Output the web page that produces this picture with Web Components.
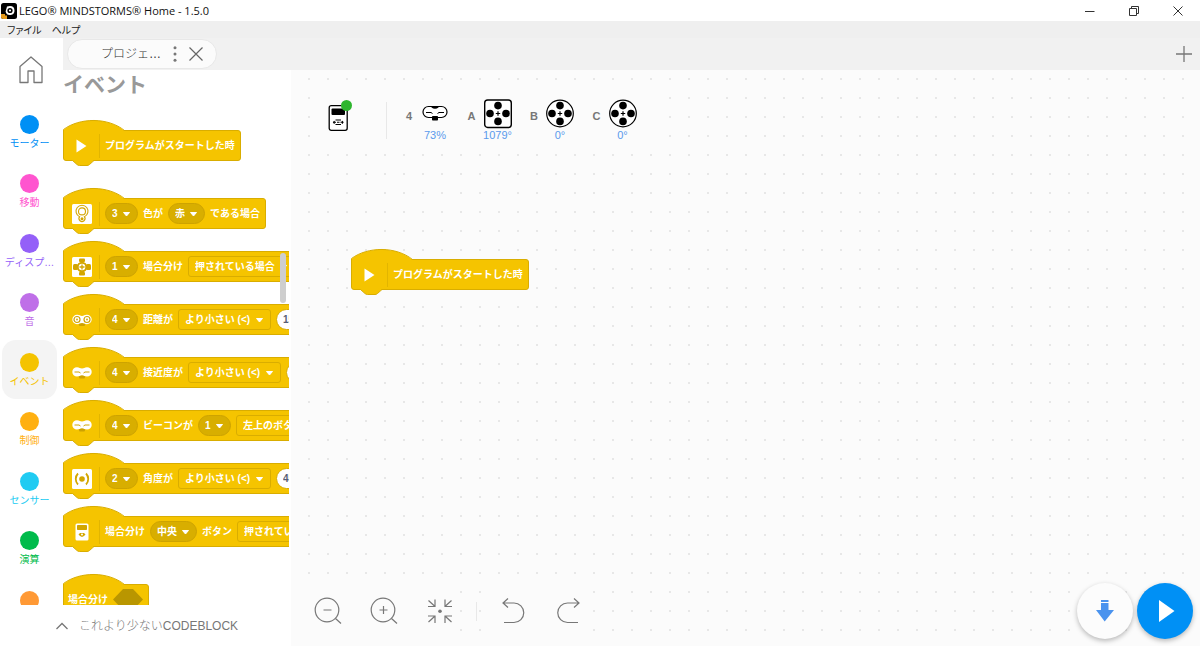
<!DOCTYPE html>
<html lang="ja">
<head>
<meta charset="utf-8">
<title>LEGO® MINDSTORMS® Home - 1.5.0</title>
<style>
html, body { margin: 0; height: 100%; }
body { font-family: "Liberation Sans", "Noto Sans CJK JP", sans-serif; background: #fff; overflow: hidden; }
</style>
</head>
<body>
<mindstorms-app></mindstorms-app>
<script>
const BASE = `<style>
*, *::before, *::after { box-sizing: border-box; }
button, select, input { font: inherit; color: inherit; margin: 0; padding: 0; border: 0; background: none; outline: 0; }
svg { display: block; overflow: visible; }
</style>`;

function define(name, markup, setup) {
  const template = document.createElement('template');
  template.innerHTML = BASE + markup;
  customElements.define(name, class extends HTMLElement {
    connectedCallback() {
      if (this.shadowRoot) return;
      this.attachShadow({ mode: 'open' }).append(template.content.cloneNode(true));
      if (setup) setup(this, this.shadowRoot);
    }
  });
}

const MOTOR = `<circle cx="14" cy="6.6" r="3.800"/><circle cx="6" cy="14.5" r="3.800"/><circle cx="22" cy="14.5" r="3.800"/><circle cx="14" cy="22.4" r="3.800"/><path d="M14 12.300v4.400M11.800 14.500h4.400" stroke="#000" stroke-width="1.2"/>`;
const ICONS = {
  play: [20, 20, `<path d="M4.500 3.500v13l10-6.500z" fill="#fff"/>`],
  color: [20, 20, `<rect width="20" height="20" rx="1.500" fill="#fff"/><g fill="none" stroke="#d3a600" stroke-width="1.100"><path d="M7.600 12.700A6 6 0 1 1 12.400 12.700A3 3 0 1 1 7.600 12.700Z"/><circle cx="10" cy="7.400" r="3.500"/></g><circle cx="10" cy="14.700" r="1.500" fill="#d3a600"/>`],
  force: [20, 20, `<rect width="20" height="20" rx="1.500" fill="#fff"/><g fill="#d3a600"><rect x="7" y="1.500" width="6" height="3.500" rx="1"/><rect x="7" y="15" width="6" height="3.500" rx="1"/><rect x="1" y="7" width="5" height="6" rx="1.500"/><rect x="14" y="7" width="5" height="6" rx="1.500"/></g><circle cx="10" cy="10" r="4.300" fill="#fff" stroke="#d3a600" stroke-width="2"/><path d="M10 7.500v5M7.500 10h5" stroke="#d3a600" stroke-width="1.300"/>`],
  distance: [20, 20, `<rect x="7" y="10" width="6" height="6" rx="1" fill="#cda200"/><path d="M5 4.800h.500c2 0 2.500 1.200 4.500 1.200s2.500-1.200 4.500-1.200h.500a4.700 4.700 0 0 1 0 9.400c-2.500 0-3-1.200-5-1.200s-2.500 1.200-5 1.200a4.700 4.700 0 0 1 0-9.400z" fill="#fff"/><g fill="#fff" stroke="#d3a600" stroke-width="1.200"><circle cx="5" cy="9.500" r="3"/><circle cx="15" cy="9.500" r="3"/></g><g fill="#d3a600"><circle cx="5" cy="9.500" r=".9"/><circle cx="15" cy="9.500" r=".9"/></g>`],
  near: [20, 20, `<rect x="7" y="10" width="6" height="5.500" rx="1" fill="#cda200"/><path d="M5 4.200c2.500 0 3 1.300 5 1.300s2.500-1.300 5-1.300a4.700 4.700 0 0 1 0 9.400c-2.500 0-3-1.300-5-1.300s-2.500 1.300-5 1.300a4.700 4.700 0 0 1 0-9.400z" fill="#fff"/><path d="M2.500 9h4.500l1.500 1M17.500 9h-4.500l-1.500 1" fill="none" stroke="#d3a600"/>`],
  angle: [20, 20, `<rect width="20" height="20" rx="1.500" fill="#fff"/><circle cx="10" cy="10" r="2.800" fill="#d3a600"/><path d="M6 4.500c-3 3-3 8 0 11M14 4.500c3 3 3 8 0 11" fill="none" stroke="#d3a600" stroke-width="1.800"/>`],
  brick: [20, 20, `<rect x="3.500" y="1.500" width="13" height="17" rx="1.500" fill="#fff"/><rect x="5" y="3" width="10" height="5" rx=".8" fill="#d3a600"/><path d="M6.500 12.500l1.500-1.500h4l1.500 1.500-1.500 1.500-2 1-2-1z" fill="#d3a600"/><circle cx="10" cy="12.500" r="1" fill="#fff"/>`],
  eyes: [28, 30, `<rect x="2" y="7.500" width="24" height="11" rx="5.500" fill="#fff" stroke="#000" stroke-width="1.200"/><path d="M10.500 7h7v1.500q-3.500 2.500-7 0z"/><path d="M5 13.500h5l1.500 1M23 13.500h-5l-1.500 1" fill="none" stroke="#000"/><rect x="11" y="17" width="6" height="4.500" rx=".8"/>`],
  motorSquare: [28, 30, `<rect x=".7" y="1" width="26.600" height="27.500" rx="3" fill="#fff" stroke="#000" stroke-width="1.400"/>${MOTOR}`],
  motorRound: [28, 30, `<circle cx="14" cy="14.500" r="13.300" fill="#fff" stroke="#000" stroke-width="1.200"/>${MOTOR}`],
  hub: [20, 26, `<rect x="1.200" y=".7" width="18" height="24.600" rx="2" fill="#fff" stroke="#000" stroke-width="1.300"/><rect x="3.500" y="3.500" width="13.500" height="6.500" rx="1"/><path d="M7.500 15h5.500M7.500 19.500h5.500M5.500 17.300h2.500M12.500 17.300h2.500M9 17.300h2.500M6.500 16l-1 1.300 1 1.300M14 16l1 1.300-1 1.300" fill="none" stroke="#000" stroke-width="1.100"/>`],
  app: [16, 16, `<rect width="16" height="16" rx="2.500" fill="#000"/><path d="M9 3a4.500 4.500 0 1 1-4.400 5.500L6 3.500z" fill="#fff"/><circle cx="9" cy="7.500" r="2.600" fill="#000"/><circle cx="9" cy="7.500" r="1.100" fill="#fff"/><path d="M0 11h4v1.500h2V16H2.500A2.500 2.500 0 0 1 0 13.500z" fill="#e59b1c"/>`],
  minimize: [10, 10, `<path d="M0 5.500h9.500" stroke="#333"/>`],
  restore: [10, 10, `<path d="M.500 2.500h7v7h-7zM2.500 2.500v-2h7v7h-2" fill="none" stroke="#333"/>`],
  closeWindow: [10, 10, `<path d="M.500.500l9 9M9.500.500l-9 9" stroke="#333"/>`],
  home: [24, 28, `<path d="M1 10.500L12 1l11 9.500V26.500H15V15H9v11.500H1z" fill="none" stroke="#777" stroke-width="1.300" stroke-linejoin="round"/>`],
  kebab: [4, 16, `<g fill="#777"><circle cx="2" cy="1.800" r="1.500"/><circle cx="2" cy="8" r="1.500"/><circle cx="2" cy="14.200" r="1.500"/></g>`],
  close: [14, 14, `<path d="M.500.500l13 13M13.500.500l-13 13" stroke="#666" stroke-width="1.200"/>`],
  plus: [16, 16, `<path d="M8 0v16M0 8h16" stroke="#777" stroke-width="1.300"/>`],
  chevron: [12, 8, `<path d="M.500 7L6 1.500 11.500 7" fill="none" stroke="#777" stroke-width="1.300"/>`],
  zoomOut: [28, 28, `<g fill="none" stroke="#777" stroke-width="1.200"><circle cx="13" cy="13" r="11.800"/><path d="M9.500 13h8M21.500 21.500l5.500 5"/></g>`],
  zoomIn: [28, 28, `<g fill="none" stroke="#777" stroke-width="1.200"><circle cx="13" cy="13" r="11.800"/><path d="M9.500 13h8M13.500 9v8M21.500 21.500l5.500 5"/></g>`],
  fit: [28, 28, `<g fill="none" stroke="#777" stroke-width="1.200"><path d="M2 9.500h7V2.500M2.500 3.500l6 5.500M26 9.500h-7V2.500M25.500 3.500l-6 5.500M2 19h7v7M2.500 25l6-5.500M26 19h-7v7M25.500 25l-6-5.500"/></g><circle cx="14" cy="14.300" r="1.800" fill="#777"/>`],
  undo: [28, 28, `<path d="M9 1.500L4 6l5 4.500M4 6h11a9.600 9.600 0 0 1 0 19.500H5" fill="none" stroke="#777" stroke-width="1.200"/>`],
  redo: [28, 28, `<path d="M19 1.500L24 6l-5 4.500M24 6H12.500a9.600 9.600 0 0 0 0 19.500H23" fill="none" stroke="#777" stroke-width="1.200"/>`],
  download: [20, 24, `<path d="M6 1h7.500v2H6zM6 4h7.500v7H19L9.700 22.500 1 11h5z" fill="#4a93ee"/>`],
  run: [18, 22, `<path d="M1 0v22l15.500-11z" fill="#fff"/>`]
};

define('ui-icon', `<style>:host{display:block;flex:none}</style><svg aria-hidden="true"></svg>`, (host, root) => {
  const [w, h, body] = ICONS[host.getAttribute('name')];
  const svg = root.querySelector('svg');
  svg.setAttribute('viewBox', `0 0 ${w} ${h}`);
  svg.setAttribute('width', w);
  svg.setAttribute('height', h);
  svg.innerHTML = body;
});

define('window-title', `<style>
:host { display: flex; align-items: center; height: 21px; background: #fff; padding-left: 1px; color: #111; font: 11px/20px "Open Sans", "Noto Sans CJK JP", sans-serif; }
span { flex: 1; padding-left: 2px; }
button { width: 44px; height: 21px; display: grid; place-items: center; }
</style>
<ui-icon name="app"></ui-icon><span><slot></slot></span>
<button aria-label="最小化"><ui-icon name="minimize"></ui-icon></button>
<button aria-label="元に戻す"><ui-icon name="restore"></ui-icon></button>
<button aria-label="閉じる"><ui-icon name="closeWindow"></ui-icon></button>`);

define('menu-bar', `<style>
:host { display: flex; align-items: center; gap: 10px; height: 17px; padding-left: 7px; background: #efefef; color: #222; font: 10px/16px "Noto Sans CJK JP", sans-serif; }
button { font-feature-settings: "palt"; }
</style><button>ファイル</button><button>ヘルプ</button>`);

define('tab-bar', `<style>
:host { display: flex; align-items: center; justify-content: space-between; background: #f1f1f1; padding: 0 8px 0 4px; }
.tab { display: flex; align-items: center; height: 30px; width: 150px; border: 1px solid #e8e8e8; border-radius: 15px; background: #fbfbfb; padding: 0 13px 0 33px; color: #333; font-size: 12px; }
.name { flex: 1; line-height: 20px; white-space: nowrap; font-family: "Liberation Sans", "Noto Sans CJK JP", sans-serif; font-weight: 300; }
.more { margin: 0 12px; }
</style>
<div class="tab"><span class="name"><slot></slot></span><button class="more" aria-label="メニュー"><ui-icon name="kebab"></ui-icon></button><button aria-label="閉じる"><ui-icon name="close"></ui-icon></button></div>
<button aria-label="追加"><ui-icon name="plus"></ui-icon></button>`);

define('category-item', `<style>
:host { display: block; padding-left: 2px; min-height: 0; }
button { width: 55px; height: 59px; border-radius: 14px; display: flex; flex-direction: column; align-items: center; padding-top: 13px; gap: 3px; color: var(--tone); }
:host([active]) button { background: #f4f4f4; }
i { width: 19px; height: 19px; border-radius: 50%; background: var(--tone); flex: none; }
span { font: 10px/14px "Liberation Sans", "Noto Sans CJK JP", sans-serif; white-space: nowrap; }
</style><button><i></i><span><slot></slot></span></button>`);

define('side-rail', `<style>
:host { display: flex; flex-direction: column; background: #fff; overflow: hidden; min-height: 0; }
.home { align-self: flex-start; margin: 18px 0 18px 19px; }
nav { display: grid; grid-template-rows: repeat(9, 1fr); height: 535px; flex: none; }
</style>
<button class="home" aria-label="ホーム"><ui-icon name="home"></ui-icon></button>
<nav>
<category-item style="--tone:#0090f5">モーター</category-item>
<category-item style="--tone:#ff55cf">移動</category-item>
<category-item style="--tone:#9460f8">ディスプ…</category-item>
<category-item style="--tone:#bf6fe8">音</category-item>
<category-item active style="--tone:#f4c300">イベント</category-item>
<category-item style="--tone:#ffb011">制御</category-item>
<category-item style="--tone:#20cbf2">センサー</category-item>
<category-item style="--tone:#00bb4b">演算</category-item>
<category-item style="--tone:#ff9935"></category-item>
</nav>`);

/* Drop-down inside a block; kind="round" gives the dark pill. */
define('block-menu', `<style>
:host { display: block; flex: none; position: relative; height: 21px; }
select { appearance: none; display: block; height: 21px; padding: 0 19px 0 6px; border: 1px solid #d9ad00; border-radius: 3px; font-weight: 700; }
:host([kind="round"]) select { background: #d8ae00; border-color: #cda300; border-radius: 11px; }
svg { position: absolute; right: 8px; top: 9px; pointer-events: none; }
option { color: #333; }
</style><select></select><svg width="7" height="5" viewBox="0 0 7 5"><path d="M.500.500h6L3.500 4z" fill="#fff" stroke="#fff" stroke-linejoin="round"/></svg>`, (host, root) => {
  const select = root.querySelector('select');
  select.setAttribute('aria-label', host.getAttribute('label') || '選択');
  select.add(new Option(host.getAttribute('value')));
});

define('block-number', `<style>
:host { display: block; flex: none; }
input { display: block; width: 32px; height: 21px; border: 1px solid #d9ad00; border-radius: 11px; background: #fff; color: #575e75; font-weight: 700; padding-left: 6px; }
</style><input aria-label="数値">`, (host, root) => { root.querySelector('input').value = host.getAttribute('value'); });

/* Event block: a hat on top, a row of fields, and a connector below. */
define('hat-block', `<style>
:host { display: block; position: relative; width: max-content; padding: 10px 0 5px; color: #fff; font: bold 10px/15px "Liberation Sans", "Noto Sans CJK JP", sans-serif; }
.row { display: flex; align-items: center; gap: 5px; height: 31px; padding: 0 5px 0 4px; background: #f5c400; border: 1px solid #d9ad00; border-radius: 0 3px 3px 3px; white-space: nowrap; }
.hat, .foot { position: absolute; left: 0; }
.hat { top: 0; } .foot { bottom: 0; }
.lead { display: flex; align-items: center; gap: 7px; padding-left: 4px; }
.lead::after { content: ""; width: 1px; height: 24px; background: #e2b500; }
:host(:not([icon])) .lead { display: none; }
</style>
<div class="row"><span class="lead"></span><slot></slot></div>
<svg class="hat" width="62" height="12"><path d="M1 12V9.500C17-2.700 45-2.700 61 10.500V12z" fill="#f5c400"/><path d="M.500 12V9.500C17-2.700 45-2.700 61.500 10.500" fill="none" stroke="#d9ad00"/></svg>
<svg class="foot" width="34" height="6"><path d="M9 0L14 4.500Q15 5.500 16.500 5.500H24Q25.500 5.500 26.500 4.500L31 0z" fill="#f5c400"/><path d="M9.500.500L14 4.500Q15 5.500 16.500 5.500H24Q25.500 5.500 26.500 4.500L31 .500" fill="none" stroke="#d9ad00"/></svg>`, (host, root) => {
  if (!host.hasAttribute('icon')) return;
  const icon = document.createElement('ui-icon');
  icon.setAttribute('name', host.getAttribute('icon'));
  root.querySelector('.lead').append(icon);
});

define('condition-slot', `<style>:host{display:block;flex:none}</style><svg width="30" height="21"><path d="M0 10.500L10 0h10l10 10.500L20 21H10z" fill="#b99600"/></svg>`);

define('block-palette', `<style>
:host { display: block; position: relative; background: #fff; min-height: 0; }
.view { height: 100%; margin-right: 2px; overflow-x: clip; }
h2 { margin: 0 0 23px; color: #999; font: bold 21px/27px "Noto Sans CJK JP", sans-serif; }
.list, .group { display: flex; flex-direction: column; }
.list { gap: 22px; } .group { gap: 7px; }
.thumb { position: absolute; right: 5px; top: 183px; width: 6px; height: 50px; border-radius: 3px; background: #cecece; }
</style>
<div class="view"><h2>イベント</h2>
<div class="list">
<hat-block icon="play"><span>プログラムがスタートした時</span></hat-block>
<div class="group">
<hat-block icon="color"><block-menu kind="round" value="3"></block-menu><span>色が</span><block-menu kind="round" value="赤"></block-menu><span>である場合</span></hat-block>
<hat-block icon="force"><block-menu kind="round" value="1"></block-menu><span>場合分け</span><block-menu value="押されている場合"></block-menu></hat-block>
<hat-block icon="distance"><block-menu kind="round" value="4"></block-menu><span>距離が</span><block-menu value="より小さい (&lt;)"></block-menu><block-number value="15"></block-number></hat-block>
<hat-block icon="near"><block-menu kind="round" value="4"></block-menu><span>接近度が</span><block-menu value="より小さい (&lt;)"></block-menu><block-number value=""></block-number></hat-block>
<hat-block icon="near"><block-menu kind="round" value="4"></block-menu><span>ビーコンが</span><block-menu kind="round" value="1"></block-menu><block-menu value="左上のボタン"></block-menu></hat-block>
<hat-block icon="angle"><block-menu kind="round" value="2"></block-menu><span>角度が</span><block-menu value="より小さい (&lt;)"></block-menu><block-number value="45"></block-number></hat-block>
<hat-block icon="brick"><span>場合分け</span><block-menu kind="round" value="中央"></block-menu><span>ボタン</span><block-menu value="押されている"></block-menu></hat-block>
</div>
<hat-block><span>場合分け</span><condition-slot></condition-slot></hat-block>
</div></div>
<div class="thumb"></div>`);

define('palette-footer', `<style>
:host { display: block; position: relative; z-index: 1; background: #fff; }
button { display: flex; align-items: center; gap: 11px; height: 41px; padding-left: 56px; color: #777; font: 12px/18px "Liberation Sans", "Noto Sans CJK JP", sans-serif; font-weight: 300; white-space: nowrap; }
</style><button><ui-icon name="chevron"></ui-icon><span>これより少ないCODEBLOCK</span></button>`);

define('port-status', `<style>
:host { display: grid; grid-template-columns: 10px 42px; justify-items: center; align-items: center; }
b { font-size: 11px; line-height: 14px; color: #777; padding-top: 4px; }
span { grid-column: 2; font-size: 11px; line-height: 12px; color: #5a9aec; }
</style><b></b><div class="pic"></div><span><slot></slot></span>`, (host, root) => {
  root.querySelector('b').textContent = host.getAttribute('port');
  const icon = document.createElement('ui-icon');
  icon.setAttribute('name', host.getAttribute('device'));
  root.querySelector('.pic').append(icon);
});

define('hub-bar', `<style>
:host { display: flex; align-items: center; background: #fbfbfb; }
.hub { position: relative; margin: 0 38px 4px 0; }
.hub i { position: absolute; right: -4px; top: -5px; width: 11px; height: 11px; border-radius: 50%; background: #2db52d; }
.line { width: 1px; height: 37px; background: #e8e8e8; margin-right: 17px; }
.ports { display: grid; grid-template-columns: repeat(4, 1fr); width: 250px; }
</style>
<button class="hub" aria-label="ハブ"><ui-icon name="hub"></ui-icon><i></i></button><div class="line"></div>
<div class="ports">
<port-status port="4" device="eyes">73%</port-status>
<port-status port="A" device="motorSquare">1079°</port-status>
<port-status port="B" device="motorRound">0°</port-status>
<port-status port="C" device="motorRound">0°</port-status>
</div>`);

define('canvas-tools', `<style>
:host { display: flex; align-items: center; justify-content: space-between; height: 70px; padding: 0 7px 0 17px; }
.group { display: flex; align-items: center; gap: 16px; }
.set { display: flex; align-items: center; gap: 28px; height: 57px; padding: 0 6px; background: #fbfbfb; }
.line { width: 1px; height: 19px; background: #e8e8e8; }
.actions { display: flex; gap: 4px; }
.actions button { width: 56px; height: 56px; border-radius: 50%; display: grid; place-items: center; background: #fcfcfc; box-shadow: 0 2px 5px #0004; }
.actions .run { background: #0090f5; padding-left: 4px; }
</style>
<div class="group">
<div class="set">
<button aria-label="縮小"><ui-icon name="zoomOut"></ui-icon></button>
<button aria-label="拡大"><ui-icon name="zoomIn"></ui-icon></button>
<button aria-label="全体表示"><ui-icon name="fit"></ui-icon></button>
</div>
<div class="line"></div>
<div class="set">
<button aria-label="元に戻す"><ui-icon name="undo"></ui-icon></button>
<button aria-label="やり直し"><ui-icon name="redo"></ui-icon></button>
</div>
</div>
<div class="actions"><button aria-label="ダウンロード"><ui-icon name="download"></ui-icon></button><button class="run" aria-label="実行"><ui-icon name="run"></ui-icon></button></div>`);

define('work-canvas', `<style>
:host { display: flex; flex-direction: column; justify-content: space-between; position: relative; min-height: 0; background: radial-gradient(circle at 1px 1px, #e7e7e7 1px, transparent 1px) 17px 8px / 19px 19px #fbfbfb; }
hub-bar { align-self: flex-start; margin: 20px 0 0 20px; padding: 9px 10px 9px 17px; }
hat-block { position: absolute; left: 60px; top: 179px; }
</style>
<hub-bar></hub-bar>
<hat-block icon="play"><span>プログラムがスタートした時</span></hat-block>
<canvas-tools></canvas-tools>`);

define('mindstorms-app', `<style>
:host { display: flex; flex-direction: column; height: 100%; }
main { flex: 1; min-height: 0; display: grid; grid-template-columns: 63px 228px 1fr; grid-template-rows: 32px 1fr auto; }
side-rail { grid-area: 1 / 1 / 3 / 2; }
tab-bar { grid-area: 1 / 2 / 2 / 4; }
block-palette { grid-area: 2 / 2 / 3 / 3; }
palette-footer { grid-area: 3 / 1 / 4 / 3; }
work-canvas { grid-area: 2 / 3 / 4 / 4; }
</style>
<window-title>LEGO® MINDSTORMS® Home - 1.5.0</window-title>
<menu-bar></menu-bar>
<main>
<side-rail></side-rail><tab-bar>プロジェ…</tab-bar><block-palette></block-palette><palette-footer></palette-footer><work-canvas></work-canvas>
</main>`);
</script>
</body>
</html>
